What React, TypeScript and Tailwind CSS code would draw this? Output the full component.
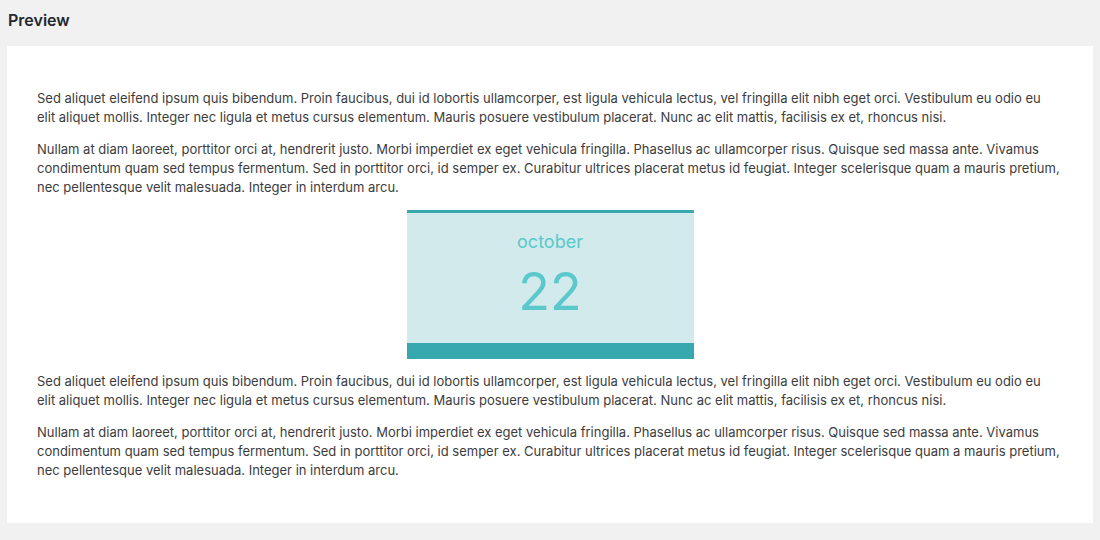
const p2 =
    'Nullam at diam laoreet, porttitor orci at, hendrerit justo. Morbi imperdiet ex eget vehicula fringilla. Phasellus ac ullamcorper risus. Quisque sed massa ante. Vivamus condimentum quam sed tempus fermentum. Sed in porttitor orci, id semper ex. Curabitur ultrices placerat metus id feugiat. Integer scelerisque quam a mauris pretium, nec pellentesque velit malesuada. Integer in interdum arcu.';

function FirstPara() {
    return (
        <p className="my-[13px]">
            Sed aliquet eleifend ipsum quis bibendum. Proin faucibus, dui id
            lobortis ullamcorper, est ligula vehicula lectus, vel fringilla
            elit nibh eget orci. Vestibulum eu odio eu
            <br />
            elit aliquet mollis. Integer nec ligula et metus cursus elementum.
            Mauris posuere vestibulum placerat. Nunc ac elit mattis, facilisis
            ex et, rhoncus nisi.
        </p>
    );
}

function DateCard() {
    return (
        <div className="mx-auto my-[13px] w-[287px] border-t-[3px] border-[#37a8ae] bg-[#d2eaeb]">
            <div className="pt-[16px] text-center text-[18px] leading-[26px] text-[#5bc8cc]">
                october
            </div>
            <div className="mt-[9px] pb-[23px] text-center text-[52px] leading-[56px] text-[#5bc8cc]">
                22
            </div>
            <div className="h-[16px] bg-[#37a8ae]" />
        </div>
    );
}

export default function App() {
    return (
        <div className="min-h-[540px] bg-[#f1f1f1] pt-[10px] font-['Inter',sans-serif]">
            <h2 className="px-[8px] text-[16px] font-semibold leading-[20px] text-[#23282d]">
                Preview
            </h2>
            <div className="mx-[7px] mt-[16px] bg-white px-[30px] py-[30px] text-[13px] leading-[19px] text-[#3c3c3c]">
                <FirstPara />
                <p className="my-[13px]">{p2}</p>
                <DateCard />
                <FirstPara />
                <p className="my-[13px]">{p2}</p>
            </div>
        </div>
    );
}
